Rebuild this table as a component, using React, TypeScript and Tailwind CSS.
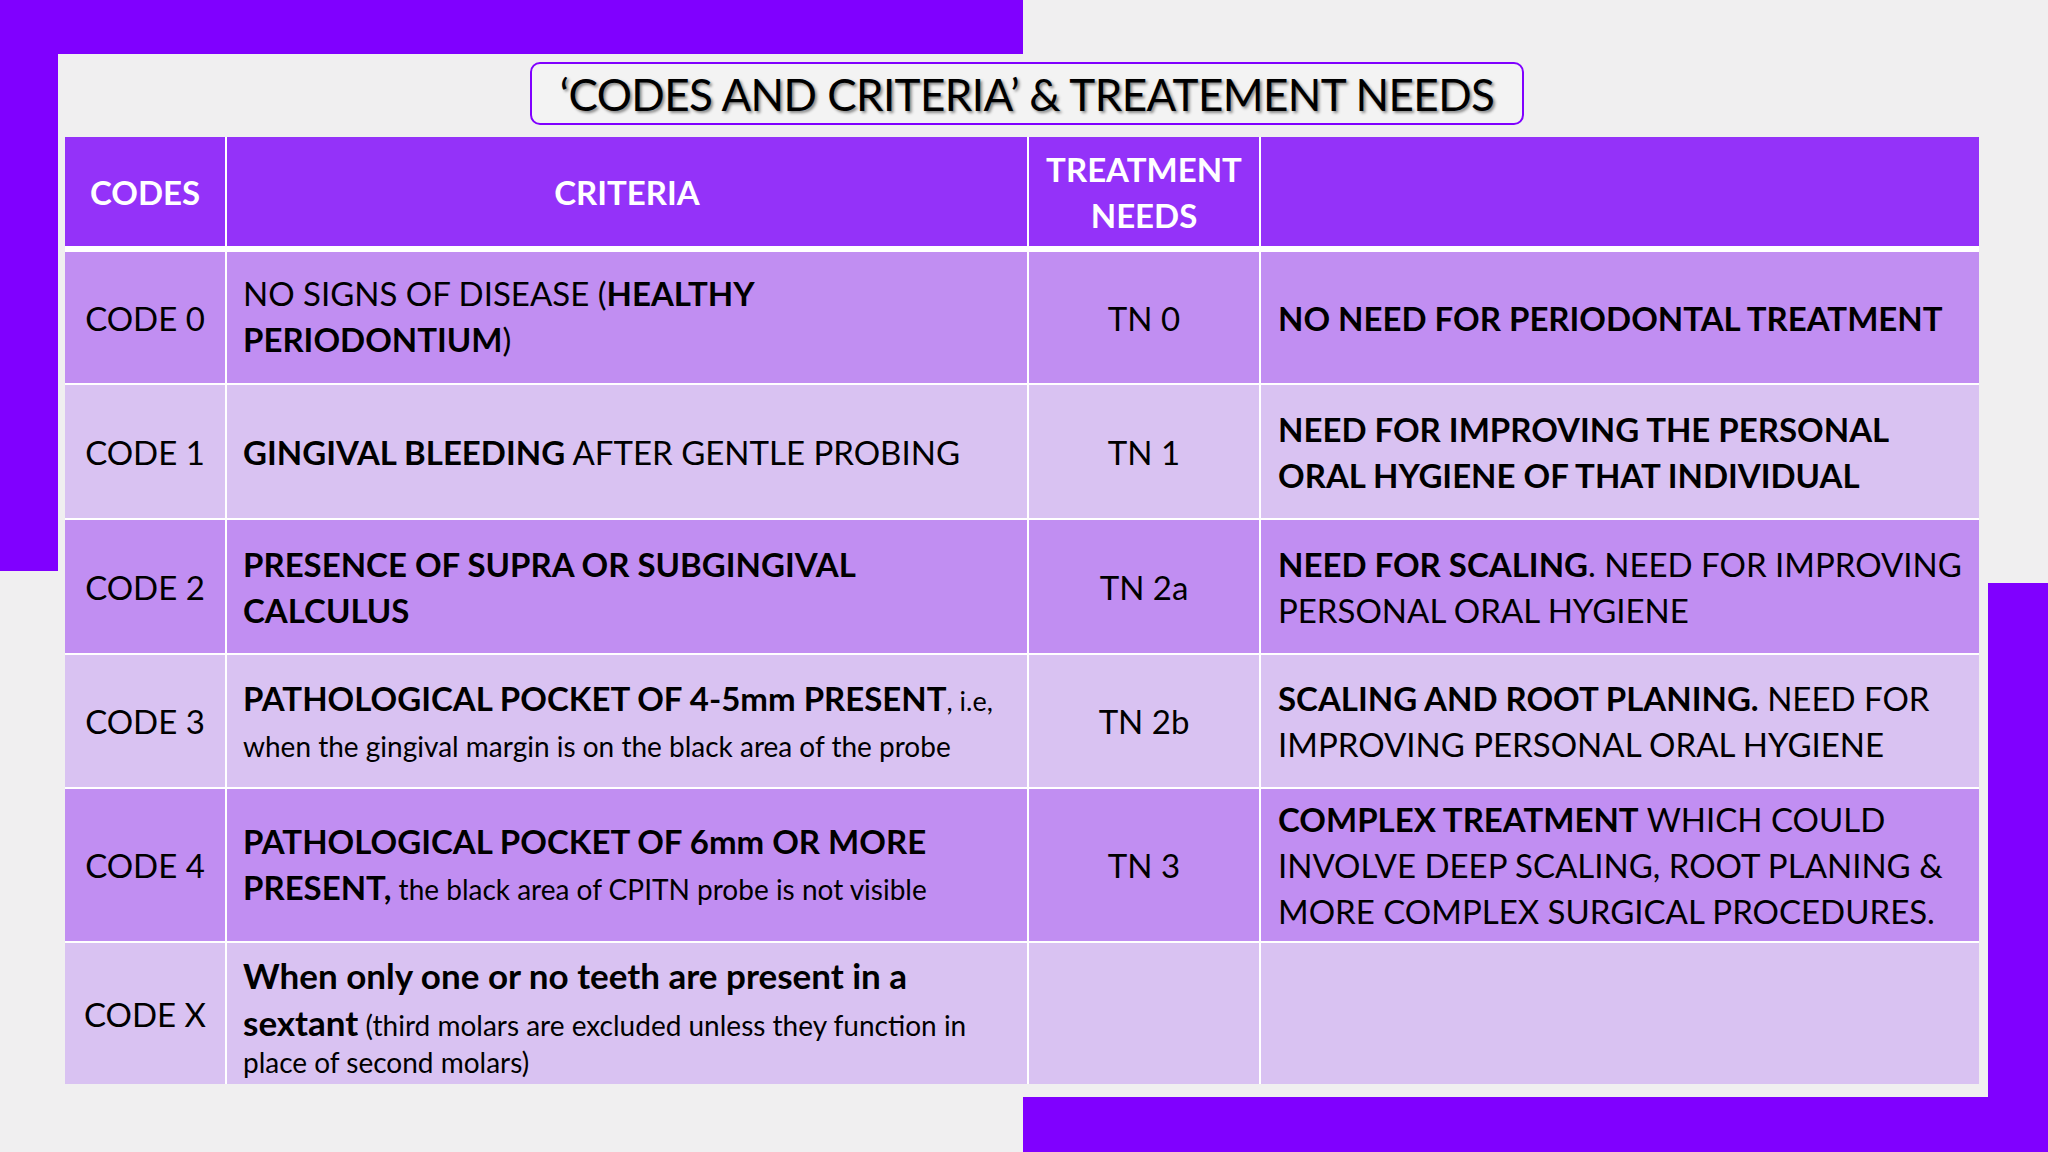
import type { ReactNode } from "react";

type Row = {
  code: string;
  criteria: ReactNode;
  tn: string;
  need: ReactNode;
  height: string;
  tone: "dark" | "light";
};

const rows: Row[] = [
  {
    code: "CODE 0",
    criteria: (
      <div className="-mt-[3px]">
        NO SIGNS OF DISEASE (<b>HEALTHY</b>
        <br />
        <b>PERIODONTIUM</b>)
      </div>
    ),
    tn: "TN 0",
    need: <b>NO NEED FOR PERIODONTAL TREATMENT</b>,
    height: "h-[131px]",
    tone: "dark",
  },
  {
    code: "CODE 1",
    criteria: (
      <>
        <b>GINGIVAL BLEEDING</b> AFTER GENTLE PROBING
      </>
    ),
    tn: "TN 1",
    need: (
      <b>
        NEED FOR IMPROVING THE PERSONAL
        <br />
        ORAL HYGIENE OF THAT INDIVIDUAL
      </b>
    ),
    height: "h-[133px]",
    tone: "light",
  },
  {
    code: "CODE 2",
    criteria: (
      <b>
        PRESENCE OF SUPRA OR SUBGINGIVAL
        <br />
        CALCULUS
      </b>
    ),
    tn: "TN 2a",
    need: (
      <>
        <b>NEED FOR SCALING</b>. NEED FOR IMPROVING
        <br />
        PERSONAL ORAL HYGIENE
      </>
    ),
    height: "h-[133px]",
    tone: "dark",
  },
  {
    code: "CODE 3",
    criteria: (
      <span className="leading-[40px]">
        <b>PATHOLOGICAL POCKET OF 4-5mm PRESENT</b>
        <span className="text-[27px]">, i.e,</span>
        <br />
        <span className="text-[28px]">
          when the gingival margin is on the black area of the probe
        </span>
      </span>
    ),
    tn: "TN 2b",
    need: (
      <>
        <b>SCALING AND ROOT PLANING.</b> NEED FOR
        <br />
        IMPROVING PERSONAL ORAL HYGIENE
      </>
    ),
    height: "h-[132px]",
    tone: "light",
  },
  {
    code: "CODE 4",
    criteria: (
      <>
        <b>PATHOLOGICAL POCKET OF 6mm OR MORE</b>
        <br />
        <b>PRESENT,</b>
        <span className="text-[28px]"> the black area of CPITN probe is not visible</span>
      </>
    ),
    tn: "TN 3",
    need: (
      <>
        <b>COMPLEX TREATMENT</b> WHICH COULD
        <br />
        INVOLVE DEEP SCALING, ROOT PLANING &amp;
        <br />
        MORE COMPLEX SURGICAL PROCEDURES.
      </>
    ),
    height: "h-[152px]",
    tone: "dark",
  },
  {
    code: "CODE X",
    criteria: (
      <div>
        <div className="text-[35px] font-bold leading-[47px]">
          When only one or no teeth are present in a
        </div>
        <div className="text-[28px] leading-[46px]">
          <b className="text-[35px]">sextant</b> (third molars are excluded unless they function in
        </div>
        <div className="text-[28px] leading-[28px]">place of second molars)</div>
      </div>
    ),
    tn: "",
    need: null,
    height: "h-[141px]",
    tone: "light",
  },
];

const cols = "grid-cols-[160px_800px_230px_718px]";

const App = () => {
  return (
    <div className="relative w-[2048px] h-[1152px] overflow-hidden bg-[#f0eff0] font-[Lato,sans-serif] text-black">
      {/* decorative bands */}
      <div className="absolute left-0 top-0 w-[1023px] h-[54px] bg-[#8000ff]" />
      <div className="absolute left-0 top-0 w-[58px] h-[571px] bg-[#8000ff]" />
      <div className="absolute right-0 bottom-0 w-[60px] h-[569px] bg-[#8000ff]" />
      <div className="absolute right-0 bottom-0 w-[1025px] h-[55px] bg-[#8000ff]" />

      <div className="relative flex flex-col items-start pl-[65px] pt-[62px]">
        {/* title */}
        <div className="ml-[465px] flex h-[63px] w-[994px] items-center justify-center rounded-[10px] border-2 border-[#8000ff] bg-[#f3f3f3]">
          <h1 className="whitespace-nowrap text-[44px] leading-none tracking-[-0.6px] [text-shadow:2px_2px_3px_rgba(0,0,0,0.45)]">
            ‘CODES AND CRITERIA’ &amp; TREATEMENT NEEDS
          </h1>
        </div>

        {/* table */}
        <div className="mt-[12px] flex w-[1914px] flex-col gap-[2px] bg-white text-[33px] leading-[46px]">
          <div className={`mb-[4px] grid h-[109px] ${cols} gap-x-[2px] font-bold text-white`}>
            <div className="flex items-center justify-center bg-[#9432f9]">CODES</div>
            <div className="flex items-center justify-center bg-[#9432f9]">CRITERIA</div>
            <div className="flex items-center justify-center bg-[#9432f9] text-center">
              TREATMENT
              <br />
              NEEDS
            </div>
            <div className="bg-[#9432f9]" />
          </div>

          {rows.map((row) => {
            const bg = row.tone === "dark" ? "bg-[#c18ef2]" : "bg-[#d9c2f2]";
            return (
              <div key={row.code} className={`grid ${row.height} ${cols} gap-x-[2px]`}>
                <div className={`flex items-center justify-center ${bg}`}>{row.code}</div>
                <div className={`flex items-center pl-4 ${bg}`}>
                  <div>{row.criteria}</div>
                </div>
                <div className={`flex items-center justify-center ${bg}`}>{row.tn}</div>
                <div className={`flex items-center pl-[17px] ${bg}`}>
                  <div>{row.need}</div>
                </div>
              </div>
            );
          })}
        </div>
      </div>
    </div>
  );
};

export default App;
